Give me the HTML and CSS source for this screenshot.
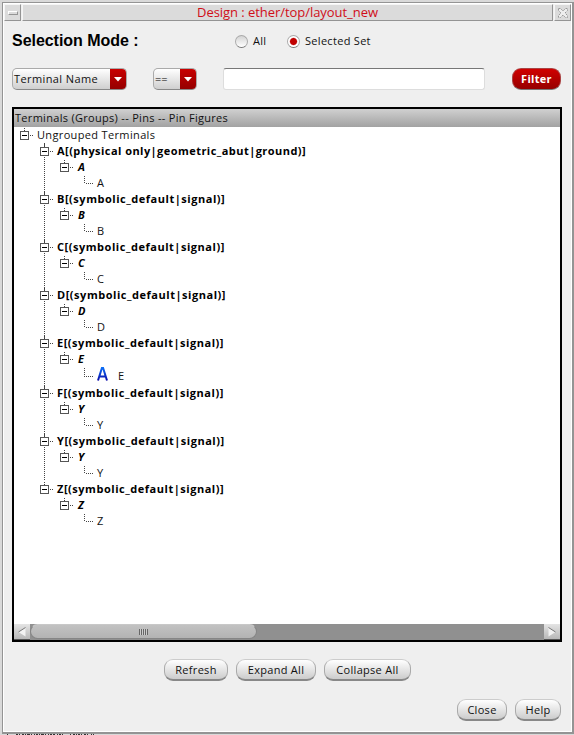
FILE: index.html
```html
<!DOCTYPE html>
<html lang="en">
<head>
<meta charset="utf-8">
<title>Design : ether/top/layout_new</title>
<link rel="stylesheet" href="styles.css">
</head>
<body>
<svg class="defs" aria-hidden="true">
  <defs>
    <linearGradient id="blue" x1="0" y1="0" x2="0" y2="1"><stop offset="0" stop-color="#0a6cf5"/><stop offset="1" stop-color="#0a0aa8"/></linearGradient>
    <symbol id="box" viewBox="0 0 20 16">
      <path d="M7.5 1v3" class="dots"/>
      <path d="M13 8.500h4" class="dots"/>
      <rect x="3.500" y="4.500" width="8" height="8" fill="#fff" stroke="#555"/>
      <path d="M5 8.500h5" stroke="#000"/>
    </symbol>
    <symbol id="line" viewBox="0 0 20 16"><path d="M7.500 0v16" class="dots"/></symbol>
    <symbol id="leaf" viewBox="0 0 20 16"><path d="M7.500 1v8M9 8.500h8" class="dots"/></symbol>
  </defs>
</svg>
<div class="window">
  <div class="titlebar">
    <div class="tb-btn"><span class="dash"></span></div>
    <div class="title"><span>Design : ether/top/layout_new</span></div>
    <div class="tb-btn"><svg width="12" height="12" viewBox="0 0 12 12"><path d="M1.500 1.500h2l2.500 2.500 2.500-2.500h2v2L8 6l2.500 2.500v2h-2L6 8l-2.500 2.500h-2v-2L4 6 1.500 3.500z" fill="#eee" stroke="#999" stroke-dasharray="2 1"/></svg></div>
  </div>
  <div class="mode">
    <h1>Selection Mode :</h1>
    <label class="radio all"><i></i><span>All</span></label>
    <label class="radio set on"><i></i><span>Selected Set</span></label>
  </div>
  <div class="filter">
    <div class="combo name"><span>Terminal Name</span><b><svg width="8" height="5"><path d="M0 0h8L4 4.500z" fill="#fff"/></svg></b></div>
    <div class="combo op"><span>==</span><b><svg width="8" height="5"><path d="M0 0h8L4 4.500z" fill="#fff"/></svg></b></div>
    <div class="field"></div>
    <button class="red">Filter</button>
  </div>
  <div class="panel">
    <div class="head"><span>Terminals (Groups) -- Pins -- Pin Figures</span></div>
    <div class="tree">
      <div class="row"><svg><use href="#box"/></svg><span>Ungrouped Terminals</span></div>

      <div class="row g first"><svg><use href="#line"/><use href="#box"/></svg><span>A[(physical only|geometric_abut|ground)]</span></div>
      <div class="row p"><svg><use href="#line"/></svg><svg><use href="#box"/></svg><span>A</span></div>
      <div class="row l"><svg><use href="#line"/></svg><svg class="lf"><use href="#leaf"/></svg><span>A</span></div>

      <div class="row g"><svg><use href="#line"/><use href="#box"/></svg><span>B[(symbolic_default|signal)]</span></div>
      <div class="row p"><svg><use href="#line"/></svg><svg><use href="#box"/></svg><span>B</span></div>
      <div class="row l"><svg><use href="#line"/></svg><svg class="lf"><use href="#leaf"/></svg><span>B</span></div>

      <div class="row g"><svg><use href="#line"/><use href="#box"/></svg><span>C[(symbolic_default|signal)]</span></div>
      <div class="row p"><svg><use href="#line"/></svg><svg><use href="#box"/></svg><span>C</span></div>
      <div class="row l"><svg><use href="#line"/></svg><svg class="lf"><use href="#leaf"/></svg><span>C</span></div>

      <div class="row g"><svg><use href="#line"/><use href="#box"/></svg><span>D[(symbolic_default|signal)]</span></div>
      <div class="row p"><svg><use href="#line"/></svg><svg><use href="#box"/></svg><span>D</span></div>
      <div class="row l"><svg><use href="#line"/></svg><svg class="lf"><use href="#leaf"/></svg><span>D</span></div>

      <div class="row g"><svg><use href="#line"/><use href="#box"/></svg><span>E[(symbolic_default|signal)]</span></div>
      <div class="row p"><svg><use href="#line"/></svg><svg><use href="#box"/></svg><span>E</span></div>
      <div class="row l tall"><svg><path d="M7.500 0v18" class="dots"/></svg><svg class="lf"><path d="M7.500 1v9M9 9.500h8" class="dots"/></svg><svg class="mark" viewBox="0 0 11 14"><path d="M1 13.500 4.900 1h1.200L10 13.500M2.600 9.500h5.800" fill="none" stroke="url(#blue)" stroke-width="2"/></svg><span>E</span></div>

      <div class="row g"><svg><use href="#line"/><use href="#box"/></svg><span>F[(symbolic_default|signal)]</span></div>
      <div class="row p"><svg><use href="#line"/></svg><svg><use href="#box"/></svg><span>Y</span></div>
      <div class="row l"><svg><use href="#line"/></svg><svg class="lf"><use href="#leaf"/></svg><span>Y</span></div>

      <div class="row g"><svg><use href="#line"/><use href="#box"/></svg><span>Y[(symbolic_default|signal)]</span></div>
      <div class="row p"><svg><use href="#line"/></svg><svg><use href="#box"/></svg><span>Y</span></div>
      <div class="row l"><svg><use href="#line"/></svg><svg class="lf"><use href="#leaf"/></svg><span>Y</span></div>

      <div class="row g"><svg><use href="#box"/></svg><span>Z[(symbolic_default|signal)]</span></div>
      <div class="row p"><svg></svg><svg><use href="#box"/></svg><span>Z</span></div>
      <div class="row l"><svg></svg><svg class="lf"><use href="#leaf"/></svg><span>Z</span></div>
    </div>
    <div class="scroll">
      <div class="arrow"><svg width="8" height="10"><path d="M7.500.5v9L.5 5z" fill="#f2f2f2"/><path d="M7.500.5.5 5" stroke="#777" fill="none"/></svg></div>
      <div class="track"><div class="thumb"><i></i></div></div>
      <div class="arrow"><svg width="8" height="10"><path d="M.5.5v9l7-4.500z" fill="#f2f2f2"/><path d="M.5.5l7 4.500" stroke="#777" fill="none"/></svg></div>
    </div>
  </div>
  <div class="actions">
    <button class="w64">Refresh</button>
    <button class="w80">Expand All</button>
    <button class="w87">Collapse All</button>
  </div>
  <div class="footer">
    <button class="w50">Close</button>
    <button class="w46">Help</button>
  </div>
</div>
<svg class="below" width="110" height="1"><path d="M5 .5h93" stroke="#333" stroke-dasharray="1 8 2 1 1 2 2 1 1 1 3 1 1 2 1 1 2 1 1 1 3 1 1 2 1 1 2 1 2 2 1 1 2 1 1 7 1 2 2 1 1 1 2 1 1 2 2 1 1 3 1 1"/></svg>
</body>
</html>
```
FILE: styles.css
```css
* { box-sizing: border-box; }
body { margin: 0; width: 574px; height: 735px; overflow: hidden; background: #d9d9d9; padding: 2px 0 0 2px; font: 11px/16px "Open Sans", sans-serif; color: #111; letter-spacing: 0.3px; }
.defs { position: absolute; width: 0; height: 0; }
.dots { stroke: #444; stroke-dasharray: 1 1; fill: none; }
.window { width: 572px; height: 732px; background: #efefef; border: 1px solid #949494; border-right-width: 2px; border-bottom-width: 2px; box-shadow: inset 1px 1px #fff, inset -1px -1px #fff; display: flex; flex-direction: column; }
.titlebar { display: flex; gap: 1px; height: 18px; margin: 1px 1px 0; }
.tb-btn, .title { background: #dbdbdb; border: 1px solid #f5f5f5; border-right-color: #949494; border-bottom-color: #949494; display: flex; align-items: center; justify-content: center; }
.tb-btn { width: 17px; height: 17px; }
.title { flex: 1; height: 17px; color: #d00d18; font-size: 13px; letter-spacing: -0.05px; padding-bottom: 2px; }
.dash { width: 10px; height: 4px; border: 1px solid #fff; border-right-color: #949494; border-bottom-color: #949494; }
.mode { display: flex; height: 38px; align-items: center; padding-left: 9px; }
h1 { font: bold 16px "Liberation Sans", sans-serif; margin: 0; width: 223px; letter-spacing: -0.04px; color: #000; }
.radio { display: flex; align-items: center; gap: 5px; }
.radio.all { width: 52px; }
.radio i { width: 13px; height: 13px; border-radius: 50%; border: 1px solid #aaa; border-bottom-color: #777; background: linear-gradient(#d4d4d4, #fff); }
.radio.on i { background: radial-gradient(circle, #c00000 0 3px, #fff 4.200px); }
.filter { display: flex; height: 22px; margin: 8px 0 0 9px; }
.combo { display: flex; height: 22px; border: 1px solid #aaa; border-bottom-color: #888; border-radius: 5px; background: linear-gradient(#fff, #cfcfcf); overflow: hidden; }
.combo span { flex: 1; padding: 2px 0 0 1px; letter-spacing: 0.4px; }
.combo b { width: 16px; background: linear-gradient(#c80000, #950000); display: flex; align-items: center; justify-content: center; }
.name { width: 115px; margin-right: 26px; }
.op { width: 44px; margin-right: 26px; }
.combo.op span { letter-spacing: 0; color: #000; }
.field { width: 262px; height: 22px; background: #fff; border: 1px solid #ddd; border-top-color: #777; border-radius: 3px; margin-right: 27px; }
button { font: inherit; letter-spacing: inherit; color: #111; padding: 0; height: 22px; border: 1px solid #aaa; border-top-color: #ccc; border-bottom: 2px solid #888; border-radius: 9px; background: linear-gradient(#fff, #ccc); }
.red { width: 49px; color: #fff; font-weight: bold; background: linear-gradient(#d00000, #960000); border: 1px solid #a44; border-bottom-color: #777; }
.panel { width: 550px; height: 535px; border: 2px solid #000; background: #fff; margin: 17px 0 0 9px; display: flex; flex-direction: column; }
.head { height: 18px; background: linear-gradient(#d0d0d0, #a2a2a2); padding: 1px 0 0 1px; }
.tree { flex: 1; }
.row { display: flex; height: 16px; padding-left: 3px; white-space: pre; letter-spacing: 0.35px; }
.row svg { width: 20px; height: 16px; flex: none; }
.row.g, .row.p, .row.l { padding-left: 23px; }
.row.g { font-weight: bold; color: #000; letter-spacing: 0.53px; }
.row.first { letter-spacing: 0.45px; }
.row.p { font-weight: bold; font-style: italic; color: #000; }
.row.p span { padding-left: 1px; }
.row .lf { margin-left: 20px; }
.row.tall, .row.tall svg { height: 18px; line-height: 18px; }
.row.tall .mark { width: 11px; height: 14px; margin: 0 10px 0 0; }
.scroll { height: 16px; display: flex; background: #909090; }
.arrow { width: 16px; display: flex; align-items: center; justify-content: center; background: linear-gradient(#e4e4e4, #b8b8b8); border-bottom: 1px solid #555; }
.track { flex: 1; }
.thumb { width: 227px; height: 15px; border: 1px solid #858585; border-top-color: #c8c8c8; border-radius: 8px; background: linear-gradient(#c2c2c2, #b3b3b3); display: flex; align-items: center; justify-content: center; }
.thumb i { width: 9px; height: 6px; background: repeating-linear-gradient(90deg, #666 0 1px, #ccc 1px 2px); }
.actions { display: flex; gap: 8px; margin: 17px 0 0 161px; }
.footer { display: flex; gap: 8px; margin: 18px 0 0 454px; }
.w64 { width: 64px; } .w80 { width: 80px; } .w87 { width: 87px; } .w50 { width: 50px; } .w46 { width: 46px; }
.below { display: block; }
```
